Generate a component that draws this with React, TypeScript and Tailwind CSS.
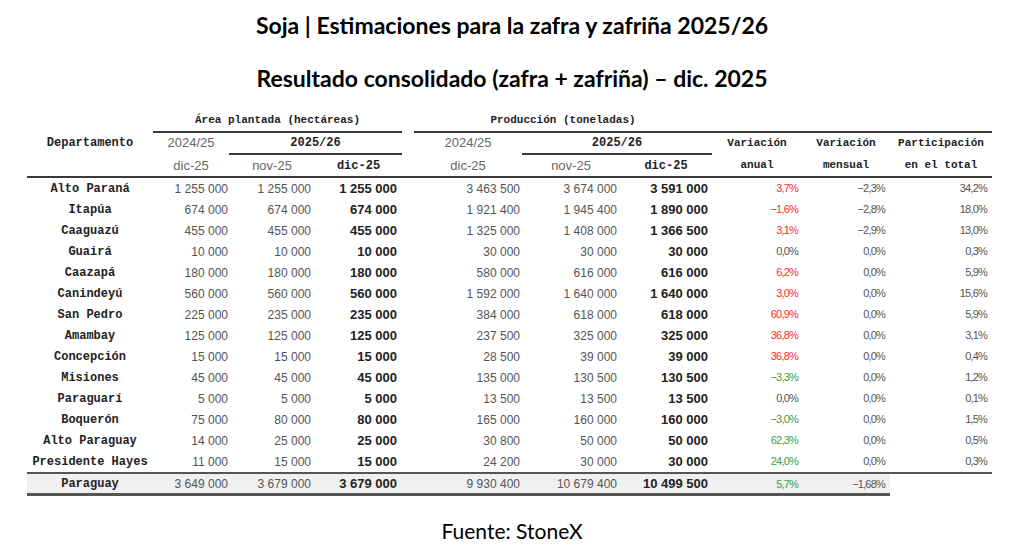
const rows: [string, string, string, string, string, string, string, string, string, string, "r" | "g" | "n"][] = [
  ["Alto Paraná", "1 255 000", "1 255 000", "1 255 000", "3 463 500", "3 674 000", "3 591 000", "3,7%", "−2,3%", "34,2%", "r"],
  ["Itapúa", "674 000", "674 000", "674 000", "1 921 400", "1 945 400", "1 890 000", "−1,6%", "−2,8%", "18,0%", "r"],
  ["Caaguazú", "455 000", "455 000", "455 000", "1 325 000", "1 408 000", "1 366 500", "3,1%", "−2,9%", "13,0%", "r"],
  ["Guairá", "10 000", "10 000", "10 000", "30 000", "30 000", "30 000", "0,0%", "0,0%", "0,3%", "n"],
  ["Caazapá", "180 000", "180 000", "180 000", "580 000", "616 000", "616 000", "6,2%", "0,0%", "5,9%", "r"],
  ["Canindeyú", "560 000", "560 000", "560 000", "1 592 000", "1 640 000", "1 640 000", "3,0%", "0,0%", "15,6%", "r"],
  ["San Pedro", "225 000", "235 000", "235 000", "384 000", "618 000", "618 000", "60,9%", "0,0%", "5,9%", "r"],
  ["Amambay", "125 000", "125 000", "125 000", "237 500", "325 000", "325 000", "36,8%", "0,0%", "3,1%", "r"],
  ["Concepción", "15 000", "15 000", "15 000", "28 500", "39 000", "39 000", "36,8%", "0,0%", "0,4%", "r"],
  ["Misiones", "45 000", "45 000", "45 000", "135 000", "130 500", "130 500", "−3,3%", "0,0%", "1,2%", "g"],
  ["Paraguarí", "5 000", "5 000", "5 000", "13 500", "13 500", "13 500", "0,0%", "0,0%", "0,1%", "n"],
  ["Boquerón", "75 000", "80 000", "80 000", "165 000", "160 000", "160 000", "−3,0%", "0,0%", "1,5%", "g"],
  ["Alto Paraguay", "14 000", "25 000", "25 000", "30 800", "50 000", "50 000", "62,3%", "0,0%", "0,5%", "g"],
  ["Presidente Hayes", "11 000", "15 000", "15 000", "24 200", "30 000", "30 000", "24,0%", "0,0%", "0,3%", "g"],
];

const mono = "font-['Liberation_Mono',monospace] font-bold text-[#222]";
const sans = "font-['Liberation_Sans',Arial,sans-serif]";
const line = "border-b-2 border-[#3a3a3a]";
const varColor = { r: "text-[#ff2a2a]", g: "text-[#3d9e3d]", n: "text-[#555]" };

// right-aligned value cells, padding taken from where the figures end in each column
const num = `${sans} text-[12px] text-[#555] flex items-center justify-end h-[21px]`;
const bold = `${sans} text-[13px] font-bold text-[#222] flex items-center justify-end h-[21px]`;
const pct = `${sans} text-[11px] tracking-[-0.8px] flex items-center justify-end h-[21px]`;

const HeadCell = ({ children, className = "" }: { children?: React.ReactNode; className?: string }) => (
  <div className={`flex items-center justify-center ${className}`}>{children}</div>
);

const App = () => {
  return (
    <div className="w-[1024px] h-[550px] bg-white flex flex-col overflow-hidden">
      <h1 className="mt-[10px] text-center leading-[30px] text-[23px] font-bold text-black font-['Lato',sans-serif]">
        Soja | Estimaciones para la zafra y zafriña 2025/26
      </h1>
      <h2 className="mt-[23px] text-center leading-[30px] text-[23px] font-bold text-black font-['Lato',sans-serif]">
        Resultado consolidado (zafra + zafriña) – dic. 2025
      </h2>

      <div className="mt-[17px] ml-[27px] grid grid-cols-[126px_76px_86px_87px_12px_108px_98px_92px_90px_88px_102px]">
        {/* Super header */}
        <div className="h-[23px]" />
        <HeadCell className={`col-span-3 h-[23px] ${line} ${mono} text-[11px]`}>Área plantada (hectáreas)</HeadCell>
        <div />
        <HeadCell className={`col-span-3 h-[23px] ${line} ${mono} text-[11px]`}>Producción (toneladas)</HeadCell>
        <div className={`col-span-3 h-[23px] ${line}`} />

        {/* Campaign row */}
        <HeadCell className={`h-[22px] pb-[2px] ${mono} text-[12px]`}>Departamento</HeadCell>
        <HeadCell className={`h-[22px] pb-[2px] ${sans} text-[13px] text-[#666]`}>2024/25</HeadCell>
        <HeadCell className={`col-span-2 h-[22px] ${line} ${mono} text-[12px]`}>2025/26</HeadCell>
        <div />
        <HeadCell className={`h-[22px] pb-[2px] ${sans} text-[13px] text-[#666]`}>2024/25</HeadCell>
        <HeadCell className={`col-span-2 h-[22px] ${line} ${mono} text-[12px]`}>2025/26</HeadCell>
        <HeadCell className={`h-[22px] pb-[2px] ${mono} text-[11px]`}>Variación</HeadCell>
        <HeadCell className={`h-[22px] pb-[2px] ${mono} text-[11px]`}>Variación</HeadCell>
        <HeadCell className={`h-[22px] pb-[2px] ${mono} text-[11px]`}>Participación</HeadCell>

        {/* Month row */}
        <div className={`h-[23px] ${line}`} />
        <HeadCell className={`h-[23px] ${line} ${sans} text-[13px] text-[#666]`}>dic-25</HeadCell>
        <HeadCell className={`h-[23px] ${line} ${sans} text-[13px] text-[#666]`}>nov-25</HeadCell>
        <HeadCell className={`h-[23px] ${line} ${mono} text-[12px]`}>dic-25</HeadCell>
        <div className={`h-[23px] ${line}`} />
        <HeadCell className={`h-[23px] ${line} ${sans} text-[13px] text-[#666]`}>dic-25</HeadCell>
        <HeadCell className={`h-[23px] ${line} ${sans} text-[13px] text-[#666]`}>nov-25</HeadCell>
        <HeadCell className={`h-[23px] ${line} ${mono} text-[12px]`}>dic-25</HeadCell>
        <HeadCell className={`h-[23px] ${line} ${mono} text-[11px]`}>anual</HeadCell>
        <HeadCell className={`h-[23px] ${line} ${mono} text-[11px]`}>mensual</HeadCell>
        <HeadCell className={`h-[23px] ${line} ${mono} text-[11px]`}>en el total</HeadCell>

        {/* Departments */}
        {rows.map((r) => (
          <div key={r[0]} className="contents">
            <div className={`h-[21px] flex items-center justify-center ${mono} text-[12px]`}>{r[0]}</div>
            <div className={`${num} pr-[1px]`}>{r[1]}</div>
            <div className={`${num} pr-[4px]`}>{r[2]}</div>
            <div className={`${bold} pr-[5px]`}>{r[3]}</div>
            <div />
            <div className={`${num} pr-[2px]`}>{r[4]}</div>
            <div className={`${num} pr-[3px]`}>{r[5]}</div>
            <div className={`${bold} pr-[4px]`}>{r[6]}</div>
            <div className={`${pct} pr-[4px] ${varColor[r[10]]}`}>{r[7]}</div>
            <div className={`${pct} pr-[5px] text-[#555]`}>{r[8]}</div>
            <div className={`${pct} pr-[5px] text-[#555]`}>{r[9]}</div>
          </div>
        ))}

        {/* Total */}
        <div className="col-span-10 h-[24px] bg-[#f0f0f0] border-t-2 border-b-[3px] border-[#555] grid grid-cols-[126px_76px_86px_87px_12px_108px_98px_92px_90px_88px]">
          <div className={`flex items-center justify-center ${mono} text-[12px]`}>Paraguay</div>
          <div className={`${num} h-auto pr-[1px]`}>3 649 000</div>
          <div className={`${num} h-auto pr-[4px]`}>3 679 000</div>
          <div className={`${bold} h-auto pr-[5px]`}>3 679 000</div>
          <div />
          <div className={`${num} h-auto pr-[2px]`}>9 930 400</div>
          <div className={`${num} h-auto pr-[3px]`}>10 679 400</div>
          <div className={`${bold} h-auto pr-[4px]`}>10 499 500</div>
          <div className={`${pct} h-auto pr-[4px] text-[#3d9e3d]`}>5,7%</div>
          <div className={`${pct} h-auto pr-[5px] text-[#555]`}>−1,68%</div>
        </div>
        <div className="h-[24px] border-t-2 border-[#555]" />
      </div>

      <p className="mt-[22px] text-center leading-[26px] text-[21px] text-black font-['Lato',sans-serif]">
        Fuente: StoneX
      </p>
    </div>
  );
};

export default App;
